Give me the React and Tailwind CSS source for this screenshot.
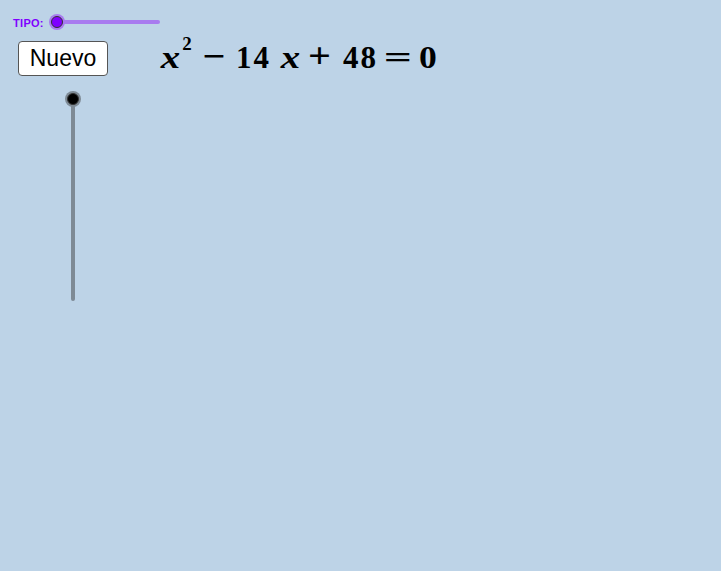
import React from "react";

const Knob = ({ inner, halo }) => (
  <div
    className={`absolute w-[16px] h-[16px] rounded-full -translate-x-1/2 -translate-y-1/2 flex items-center justify-center ${halo}`}
  >
    <div className={`w-[12px] h-[12px] rounded-full border border-[#333] ${inner}`} />
  </div>
);

export default function App() {
  return (
    <div className="relative w-[721px] h-[571px] bg-[#bdd3e7] overflow-hidden font-['Liberation_Sans',sans-serif]">
      {/* TIPO slider */}
      <div className="absolute left-[13px] top-[18px] text-[11px] font-bold text-[#7f00ff] leading-none tracking-[0.3px]">
        TIPO:
      </div>
      <div className="absolute left-[57px] top-[20px] w-[103px] h-[4px] rounded-full bg-[#a87bef]" />
      <div className="absolute left-[57px] top-[22px]">
        <Knob inner="bg-[#7f00ff]" halo="bg-[#a87bef]" />
      </div>

      {/* Nuevo button */}
      <button className="absolute left-[18px] top-[41px] w-[90px] h-[35px] bg-white border border-[#555] rounded-[4px] text-[23px] text-black leading-none flex items-center justify-center pb-[1px]">
        Nuevo
      </button>

      {/* Equation */}
      <div className="absolute left-[160px] top-[39px] text-[31px] font-bold text-black leading-none whitespace-nowrap font-['Liberation_Serif',serif] flex items-baseline">
        <span className="italic inline-block w-[21px] text-center scale-x-[1.25]">x</span>
        <span className="text-[19px] relative top-[-18px] inline-block w-[10px] text-center ml-[1px]">2</span>
        <span className="inline-block w-[22px] text-center ml-[11px] text-[35px] scale-x-[1.15]">−</span>
        <span className="inline-block w-[35px] text-center ml-[11px] tracking-[2px]">14</span>
        <span className="italic inline-block w-[21px] text-center ml-[9px] scale-x-[1.25]">x</span>
        <span className="inline-block w-[23px] text-center ml-[7px] text-[35px] scale-x-[1.15]">+</span>
        <span className="inline-block w-[35px] text-center ml-[12px] tracking-[2px]">48</span>
        <span className="inline-block w-[30px] text-center ml-[5px] scale-x-[1.6]">=</span>
        <span className="inline-block w-[20px] text-center ml-[5px] scale-x-[1.15]">0</span>
      </div>

      {/* vertical slider */}
      <div className="absolute left-[71px] top-[99px] w-[4px] h-[202px] rounded-full bg-[#7e8a95]" />
      <div className="absolute left-[73px] top-[99px]">
        <Knob inner="bg-black" halo="bg-[#7e8a95]" />
      </div>
    </div>
  );
}
